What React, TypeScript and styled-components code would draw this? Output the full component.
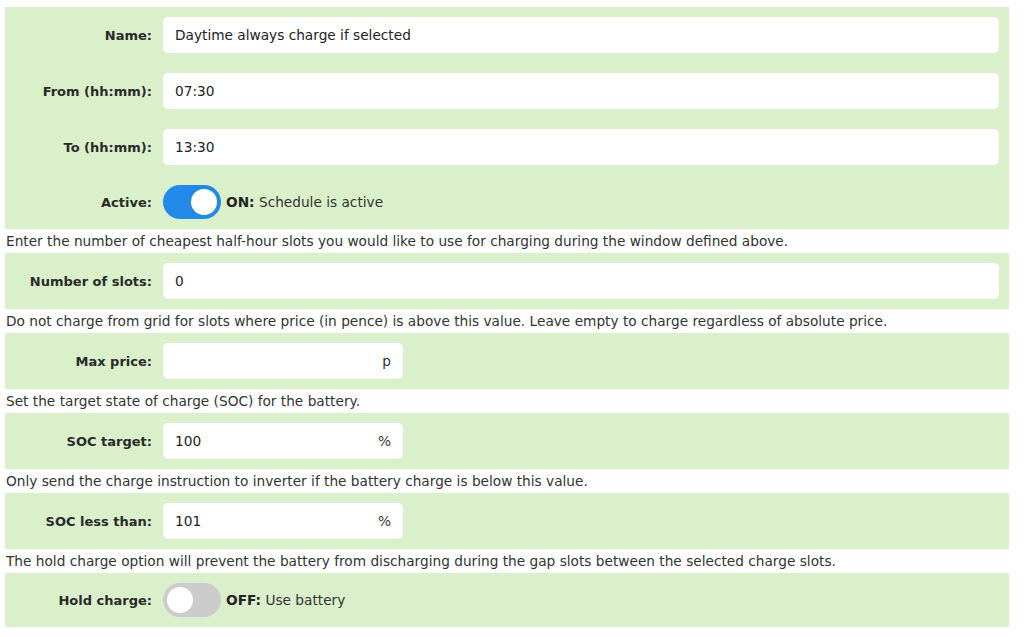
import styled, {createGlobalStyle} from 'styled-components';

const Global = createGlobalStyle`
  body {
    margin: 0;
    background: #fff;
    font-family: "DejaVu Sans", Verdana, sans-serif;
    color: #333;
  }
`;

const Page = styled.div`
  padding: 7px 15px 0 5px;
`;

const Panel = styled.div`
  background: #d9f0cb;
`;

const Row = styled.div<{$toggle?: boolean}>`
  display: flex;
  align-items: center;
  height: ${p => (p.$toggle ? 54 : 56)}px;
  padding-right: 10px;
`;

const Label = styled.label`
  flex: 0 0 147px;
  text-align: right;
  font-weight: bold;
  font-size: 13px;
  padding-right: 11px;
  color: #2a2a2a;
`;

const Field = styled.div<{$width?: number}>`
  display: flex;
  align-items: center;
  height: 36px;
  box-sizing: border-box;
  background: #fff;
  border-radius: 5px;
  padding: 0 12px;
  font-size: 13.7px;
  color: #222;
  ${p => (p.$width ? `width: ${p.$width}px;` : 'flex: 1;')}
`;

const Value = styled.span`
  flex: 1;
`;

const Suffix = styled.span`
  color: #333;
`;

const Help = styled.div`
  font-size: 13.7px;
  line-height: 24px;
  padding-left: 1px;
  color: #333;
`;

const Track = styled.div<{$on: boolean}>`
  width: 58px;
  height: 34px;
  border-radius: 17px;
  background: ${p => (p.$on ? '#2389e8' : '#cccccc')};
  display: flex;
  align-items: center;
  justify-content: ${p => (p.$on ? 'flex-end' : 'flex-start')};
  padding: 0 4px;
  box-sizing: border-box;
  margin-right: 5px;
`;

const Knob = styled.div`
  width: 26px;
  height: 26px;
  border-radius: 50%;
  background: #fff;
`;

const State = styled.span`
  font-size: 13.7px;
  color: #333;
  > b {
    color: #222;
  }
`;

function Input({label, value, suffix, width}: {label: string; value: string; suffix?: string; width?: number}) {
  return (
    <Row>
      <Label>{label}</Label>
      <Field $width={width}>
        <Value>{value}</Value>
        {suffix && <Suffix>{suffix}</Suffix>}
      </Field>
    </Row>
  );
}

function Toggle({label, on, text}: {label: string; on: boolean; text: string}) {
  return (
    <Row $toggle>
      <Label>{label}</Label>
      <Track $on={on}><Knob /></Track>
      <State><b>{on ? 'ON:' : 'OFF:'}</b> {text}</State>
    </Row>
  );
}

export default function App() {
  return (
    <Page>
      <Global />
      <Panel>
        <Input label="Name:" value="Daytime always charge if selected" />
        <Input label="From (hh:mm):" value="07:30" />
        <Input label="To (hh:mm):" value="13:30" />
        <Toggle label="Active:" on text="Schedule is active" />
      </Panel>
      <Help>Enter the number of cheapest half-hour slots you would like to use for charging during the window defined above.</Help>
      <Panel>
        <Input label="Number of slots:" value="0" />
      </Panel>
      <Help>Do not charge from grid for slots where price (in pence) is above this value. Leave empty to charge regardless of absolute price.</Help>
      <Panel>
        <Input label="Max price:" value="" suffix="p" width={240} />
      </Panel>
      <Help>Set the target state of charge (SOC) for the battery.</Help>
      <Panel>
        <Input label="SOC target:" value="100" suffix="%" width={240} />
      </Panel>
      <Help>Only send the charge instruction to inverter if the battery charge is below this value.</Help>
      <Panel>
        <Input label="SOC less than:" value="101" suffix="%" width={240} />
      </Panel>
      <Help>The hold charge option will prevent the battery from discharging during the gap slots between the selected charge slots.</Help>
      <Panel>
        <Toggle label="Hold charge:" on={false} text="Use battery" />
      </Panel>
    </Page>
  );
}
